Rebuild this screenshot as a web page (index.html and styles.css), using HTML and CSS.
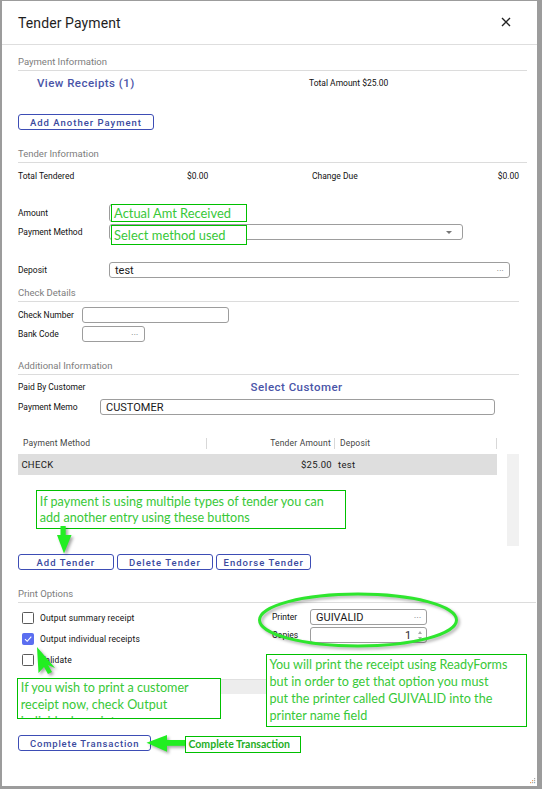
FILE: index.html
```html
<!DOCTYPE html>
<html>
<head>
<meta charset="utf-8">
<title>Tender Payment</title>
<link rel="stylesheet" href="styles.css">
</head>
<body>
<div class="dialog">
  <div class="hdr">
    <span class="title">Tender Payment</span>
    <svg class="close" width="10" height="10" viewBox="0 0 10 10"><path d="M1 1 L9 9 M9 1 L1 9" stroke="#222" stroke-width="1.4" fill="none"/></svg>
  </div>
  <div class="content">
    <div class="sec sec-wide s1">Payment Information</div>
    <div class="receipts"><span class="link">View Receipts (1)</span><span class="small">Total Amount $25.00</span></div>
    <button class="btn btn-add">Add Another Payment</button>

    <div class="sec sec-wide s2">Tender Information</div>
    <div class="totals"><span>Total Tendered</span><span>$0.00</span><span>Change Due</span><span class="r">$0.00</span></div>

    <div class="frow f-amount"><label class="lbl l91">Amount</label><div class="inp w-amount"></div></div>
    <div class="frow f-pm"><label class="lbl l91">Payment Method</label><div class="inp w-pm"><span class="caret"></span></div></div>
    <div class="frow f-dep"><label class="lbl l91">Deposit</label><div class="inp w-dep"><span class="val">test</span><span class="dots">...</span></div></div>

    <div class="sec sec-mid s3">Check Details</div>
    <div class="frow f-chk"><label class="lbl l64">Check Number</label><div class="inp w-chk"></div></div>
    <div class="frow f-bank"><label class="lbl l64">Bank Code</label><div class="inp w-bank"><span class="val"></span><span class="dots">...</span></div></div>

    <div class="sec sec-mid s4">Additional Information</div>
    <div class="frow f-paid"><label class="lbl l232">Paid By Customer</label><span class="link link-cust">Select Customer</span></div>
    <div class="frow f-memo"><label class="lbl l82">Payment Memo</label><div class="inp w-memo"><span class="val">CUSTOMER</span></div></div>

    <div class="grid">
      <div class="ghead">
        <span class="gc c1">Payment Method</span>
        <span class="gc c2">Tender Amount</span>
        <span class="gc c3">Deposit</span>
      </div>
      <div class="gbody">
        <div class="grows">
          <div class="grow">
            <span class="gd c1">CHECK</span>
            <span class="gd c2">$25.00</span>
            <span class="gd c3">test</span>
          </div>
        </div>
        <div class="gscroll"></div>
      </div>
    </div>

    <div class="tbtns">
      <button class="btn b-add">Add Tender</button>
      <button class="btn b-del">Delete Tender</button>
      <button class="btn b-end">Endorse Tender</button>
    </div>

    <div class="sec sec-full s5">Print Options</div>
    <div class="print">
      <div class="pleft">
        <div class="cbrow"><span class="cb"></span><span class="cbl">Output summary receipt</span></div>
        <div class="cbrow"><span class="cb on"><svg width="10" height="10" viewBox="0 0 10 10"><path d="M2 5.2 L4.2 7.3 L8.3 2.6" stroke="#fff" stroke-width="1.1" fill="none"/></svg></span><span class="cbl">Output individual receipts</span></div>
        <div class="cbrow"><span class="cb"></span><span class="cbl">Validate</span></div>
      </div>
      <div class="pright">
        <div class="prow p1"><label class="lbl l38">Printer</label><div class="inp w-prn"><span class="val">GUIVALID</span><span class="dots">...</span></div></div>
        <div class="prow p2"><label class="lbl l38">Copies</label><div class="inp w-prn num"><span class="val">1</span><span class="spin"><i class="up"></i><i class="dn"></i></span></div></div>
      </div>
    </div>
    <div class="graybar"></div>
    <button class="btn b-complete">Complete Transaction</button>
  </div>

  <svg class="grip" width="6" height="6" viewBox="0 0 6 6"><rect x="4" y="0" width="1.2" height="1.2" fill="#aaa"/><rect x="2" y="2" width="1.2" height="1.2" fill="#e8a060"/><rect x="4" y="2" width="1.2" height="1.2" fill="#aaa"/><rect x="0" y="4" width="1.2" height="1.2" fill="#e8a060"/><rect x="2" y="4" width="1.2" height="1.2" fill="#aaa"/><rect x="4" y="4" width="1.2" height="1.2" fill="#8ab"/></svg>

  <div class="overlay">
    <div class="note n1">Actual Amt Received</div>
    <div class="note n2">Select method used</div>
    <div class="note n3">If payment is using multiple types of tender you can<br>add another entry using these buttons</div>
    <svg class="arrow a-down" width="30" height="40" viewBox="0 0 30 40"><g transform="translate(-50,-522)"><rect x="60.5" y="526" width="5.2" height="10" fill="#22ee22"/><polygon points="57,535 71.5,535 64,553.5" fill="#22ee22"/></g></svg>
    <svg class="ellipse" width="212" height="64" viewBox="0 0 212 64"><ellipse cx="104" cy="29" rx="98.5" ry="26" fill="none" stroke="#2ee62e" stroke-width="3"/></svg>
    <svg class="arrow a-up" width="30" height="40" viewBox="0 0 30 40"><g transform="translate(-30,-642)"><polygon points="37,647 38.5,673 44,667 48,674 52,672 48,665 55,668" fill="#22ee22"/></g></svg>
    <div class="note n4">If you wish to print a customer<br>receipt now, check Output<br>individual receipts</div>
    <div class="note n5">You will print the receipt using ReadyForms<br>but in order to get that option you must<br>put the printer called GUIVALID into the<br>printer name field</div>
    <svg class="arrow a-left" width="46" height="24" viewBox="0 0 46 24"><g transform="translate(-143,-732)"><rect x="166" y="740" width="19.5" height="5.8" fill="#22ee22"/><polygon points="146.5,742.7 167,735 167,751.7" fill="#22ee22"/></g></svg>
    <div class="note n6">Complete Transaction</div>
  </div>
</div>
</body>
</html>
```
FILE: styles.css
```css
* { box-sizing: border-box; margin: 0; padding: 0; }
html, body { height: 100%; }
body {
  background: #9c9c9c;
  font-family: Roboto, "Liberation Sans", sans-serif;
  color: #1b1b1b;
  overflow: hidden;
}
.dialog {
  position: relative;
  margin: 1px 0 0 2px;
  width: 535px;
  height: 785px;
  background: #fff;
  overflow: hidden;
}
.hdr {
  height: 44px;
  border-bottom: 1px solid #dedede;
  display: flex;
  align-items: center;
  justify-content: space-between;
  padding: 0 26px 0 16px;
}
.title { font-size: 14px; color: #1e1e1e; letter-spacing: 0.1px; }
.close { margin-top: -1px; }

.content { padding-left: 16px; }

.sec {
  height: 18px;
  line-height: 17px;
  font-size: 9.5px;
  color: #7d7d7d;
  border-bottom: 1px solid #dcdcdc;
}
.sec-wide { width: 509px; }
.sec-mid { width: 501px; }
.sec-full { width: 518px; }
.s1 { margin-top: 8px; }
.s2 { margin-top: 15px; }
.s3 { margin-top: 6px; }
.s4 { margin-top: 15px; }
.s5 { margin-top: 15px; }

.receipts {
  height: 24px;
  display: grid;
  grid-template-columns: 272px auto;
  align-items: center;
  padding-left: 19px;
}
.link {
  font-size: 11.5px;
  font-weight: 500;
  letter-spacing: 0.45px;
  color: #4a55a8;
}
.small { font-size: 8.5px; color: #111; }

.btn {
  display: block;
  height: 16px;
  border: 1px solid #3d4db5;
  border-radius: 3px;
  background: #fff;
  font-family: Roboto, "Liberation Sans", sans-serif;
  font-size: 9.5px;
  font-weight: 500;
  letter-spacing: 1px;
  color: #3b4a9e;
  line-height: 13px;
  text-align: center;
}
.btn-add { margin-top: 19px; width: 136px; }

.totals {
  height: 26px;
  width: 501px;
  display: grid;
  grid-template-columns: 169px 125px 1fr auto;
  align-items: center;
  font-size: 8.5px;
  color: #111;
}

.frow { display: flex; align-items: center; }
.lbl { font-size: 8.5px; color: #111; flex: none; }
.l91 { width: 91px; }
.l64 { width: 64px; }
.l82 { width: 82px; }
.l232 { width: 232.6px; }
.l38 { width: 38px; }

.inp {
  height: 100%;
  border: 1px solid #9d9d9d;
  border-radius: 3px;
  display: flex;
  align-items: center;
  justify-content: space-between;
  padding: 0 5px;
  font-size: 11px;
  color: #1a1a1a;
}
.val { font-size: 11px; }
.dots { font-size: 8px; color: #666; letter-spacing: 0.3px; line-height: 8px; margin-top: -3px; }
.caret {
  margin-left: auto;
  margin-right: 5px;
  width: 0; height: 0;
  border-left: 3px solid transparent;
  border-right: 3px solid transparent;
  border-top: 3.5px solid #777;
}

.f-amount { margin-top: 15px; height: 18px; }
.f-pm { margin-top: 2px; height: 16px; }
.f-dep { margin-top: 22px; height: 16px; }
.f-chk { margin-top: 5px; height: 16px; }
.f-bank { margin-top: 3px; height: 16px; }
.f-paid { height: 24px; }
.f-memo { margin-top: 0; height: 16px; }

.w-amount { width: 138px; }
.w-pm { width: 354px; }
.w-dep { width: 401px; }
.w-chk { width: 147px; }
.w-bank { width: 62.5px; }
.w-memo { width: 395px; }
.w-prn { width: 117.3px; }

.grid { margin-top: 21px; width: 500.5px; }
.ghead {
  height: 14px;
  display: flex;
  align-items: center;
  font-size: 8.5px;
  color: #444;
  letter-spacing: 0.2px;
}
.gc { height: 11px; line-height: 11px; border-right: 1px solid #d8d8d8; }
.ghead .c1 { width: 189.4px; padding-left: 5px; }
.ghead .c2 { width: 128px; text-align: right; padding-right: 3.5px; }
.ghead .c3 { width: 161.3px; padding-left: 4.5px; }

.gbody { margin-top: 4px; height: 92px; display: flex; justify-content: space-between; }
.grows { width: 478.7px; }
.grow {
  height: 21px;
  background: #dedede;
  display: flex;
  align-items: center;
  font-size: 9.5px;
  color: #1a1a1a;
  letter-spacing: 0.3px;
}
.grow .c1 { width: 189.4px; padding-left: 3.4px; }
.grow .c2 { width: 128px; text-align: right; padding-right: 3.4px; }
.grow .c3 { padding-left: 2.6px; }
.gscroll { width: 11.5px; height: 92px; background: #f1f1f1; }

.tbtns { margin-top: 8px; display: flex; gap: 3.5px; }
.tbtns .btn { width: 95.4px; }
.tbtns .b-add { width: 95.7px; }

.print { display: flex; }
.pleft { width: 254px; padding-top: 9px; padding-left: 4px; }
.cbrow { height: 12px; display: flex; align-items: center; margin-bottom: 9px; }
.cbrow:last-child { margin-bottom: 0; }
.cb {
  width: 12px; height: 12px;
  border: 1px solid #5a5a5a;
  border-radius: 1.5px;
  display: flex; align-items: center; justify-content: center;
  flex: none;
}
.cb.on { background: #5b6ef0; border-color: #5b6ef0; }
.cbl { margin-left: 6px; font-size: 8.5px; color: #111; letter-spacing: 0.15px; }

.pright { padding-top: 6px; }
.prow { display: flex; align-items: center; height: 16px; }
.p2 { margin-top: 2px; }
.num { justify-content: flex-end; padding-right: 4px; }
.num .val { margin-right: 7px; color: #2b2b2b; }
.spin { display: flex; flex-direction: column; gap: 3px; }
.spin i { display: block; width: 0; height: 0; border-left: 2.5px solid transparent; border-right: 2.5px solid transparent; }
.spin .up { border-bottom: 3px solid #aaa; }
.spin .dn { border-top: 3px solid #aaa; }

.graybar {
  margin-top: 13px;
  width: 500px;
  height: 15px;
  background: #ededed;
  border-top: 1px solid #e0e0e0;
}
.b-complete { margin-top: 41px; width: 133.4px; letter-spacing: 0.8px; }

.grip { position: absolute; right: 1px; bottom: 2px; }

/* annotations */
.overlay { position: absolute; left: -2px; top: -1px; width: 542px; height: 789px; pointer-events: none; }
.note {
  position: absolute;
  border: 1px solid #00c000;
  background: #fff;
  font-family: Lato, "Open Sans", sans-serif;
  color: #38c838;
  white-space: nowrap;
  overflow: hidden;
}
.n1 { left: 110.6px; top: 204.3px; width: 136.4px; height: 18px; font-size: 12.9px; line-height: 16px; padding-left: 2.5px; }
.n2 { left: 110.6px; top: 225px; width: 136.4px; height: 19.7px; font-size: 12.9px; line-height: 18.5px; padding-left: 2.5px; }
.n3 { left: 36.3px; top: 490px; width: 309.4px; height: 38.7px; font-size: 12.6px; line-height: 16px; padding: 2.5px 0 0 2.5px; }
.n4 { left: 17.3px; top: 678.3px; width: 203.4px; height: 41px; font-size: 12.6px; line-height: 16.7px; padding: 1px 0 0 2.5px; }
.n5 { left: 266px; top: 654px; width: 260.7px; height: 72.7px; font-size: 12.6px; line-height: 17px; padding: 0.5px 0 0 2.5px; }
.n6 { left: 185px; top: 735.7px; width: 115.7px; height: 17px; font-size: 10.5px; font-weight: 700; line-height: 15px; padding-left: 2.5px; color: #1fae1f; }

.arrow { position: absolute; filter: drop-shadow(2px 2px 1.5px rgba(0,0,0,0.35)); }
.a-down { left: 50px; top: 522px; }
.a-up { left: 30px; top: 642px; }
.a-left { left: 143px; top: 732px; }
.ellipse { position: absolute; left: 253.5px; top: 591px; filter: drop-shadow(2px 2px 1.5px rgba(0,0,0,0.3)); }
```
